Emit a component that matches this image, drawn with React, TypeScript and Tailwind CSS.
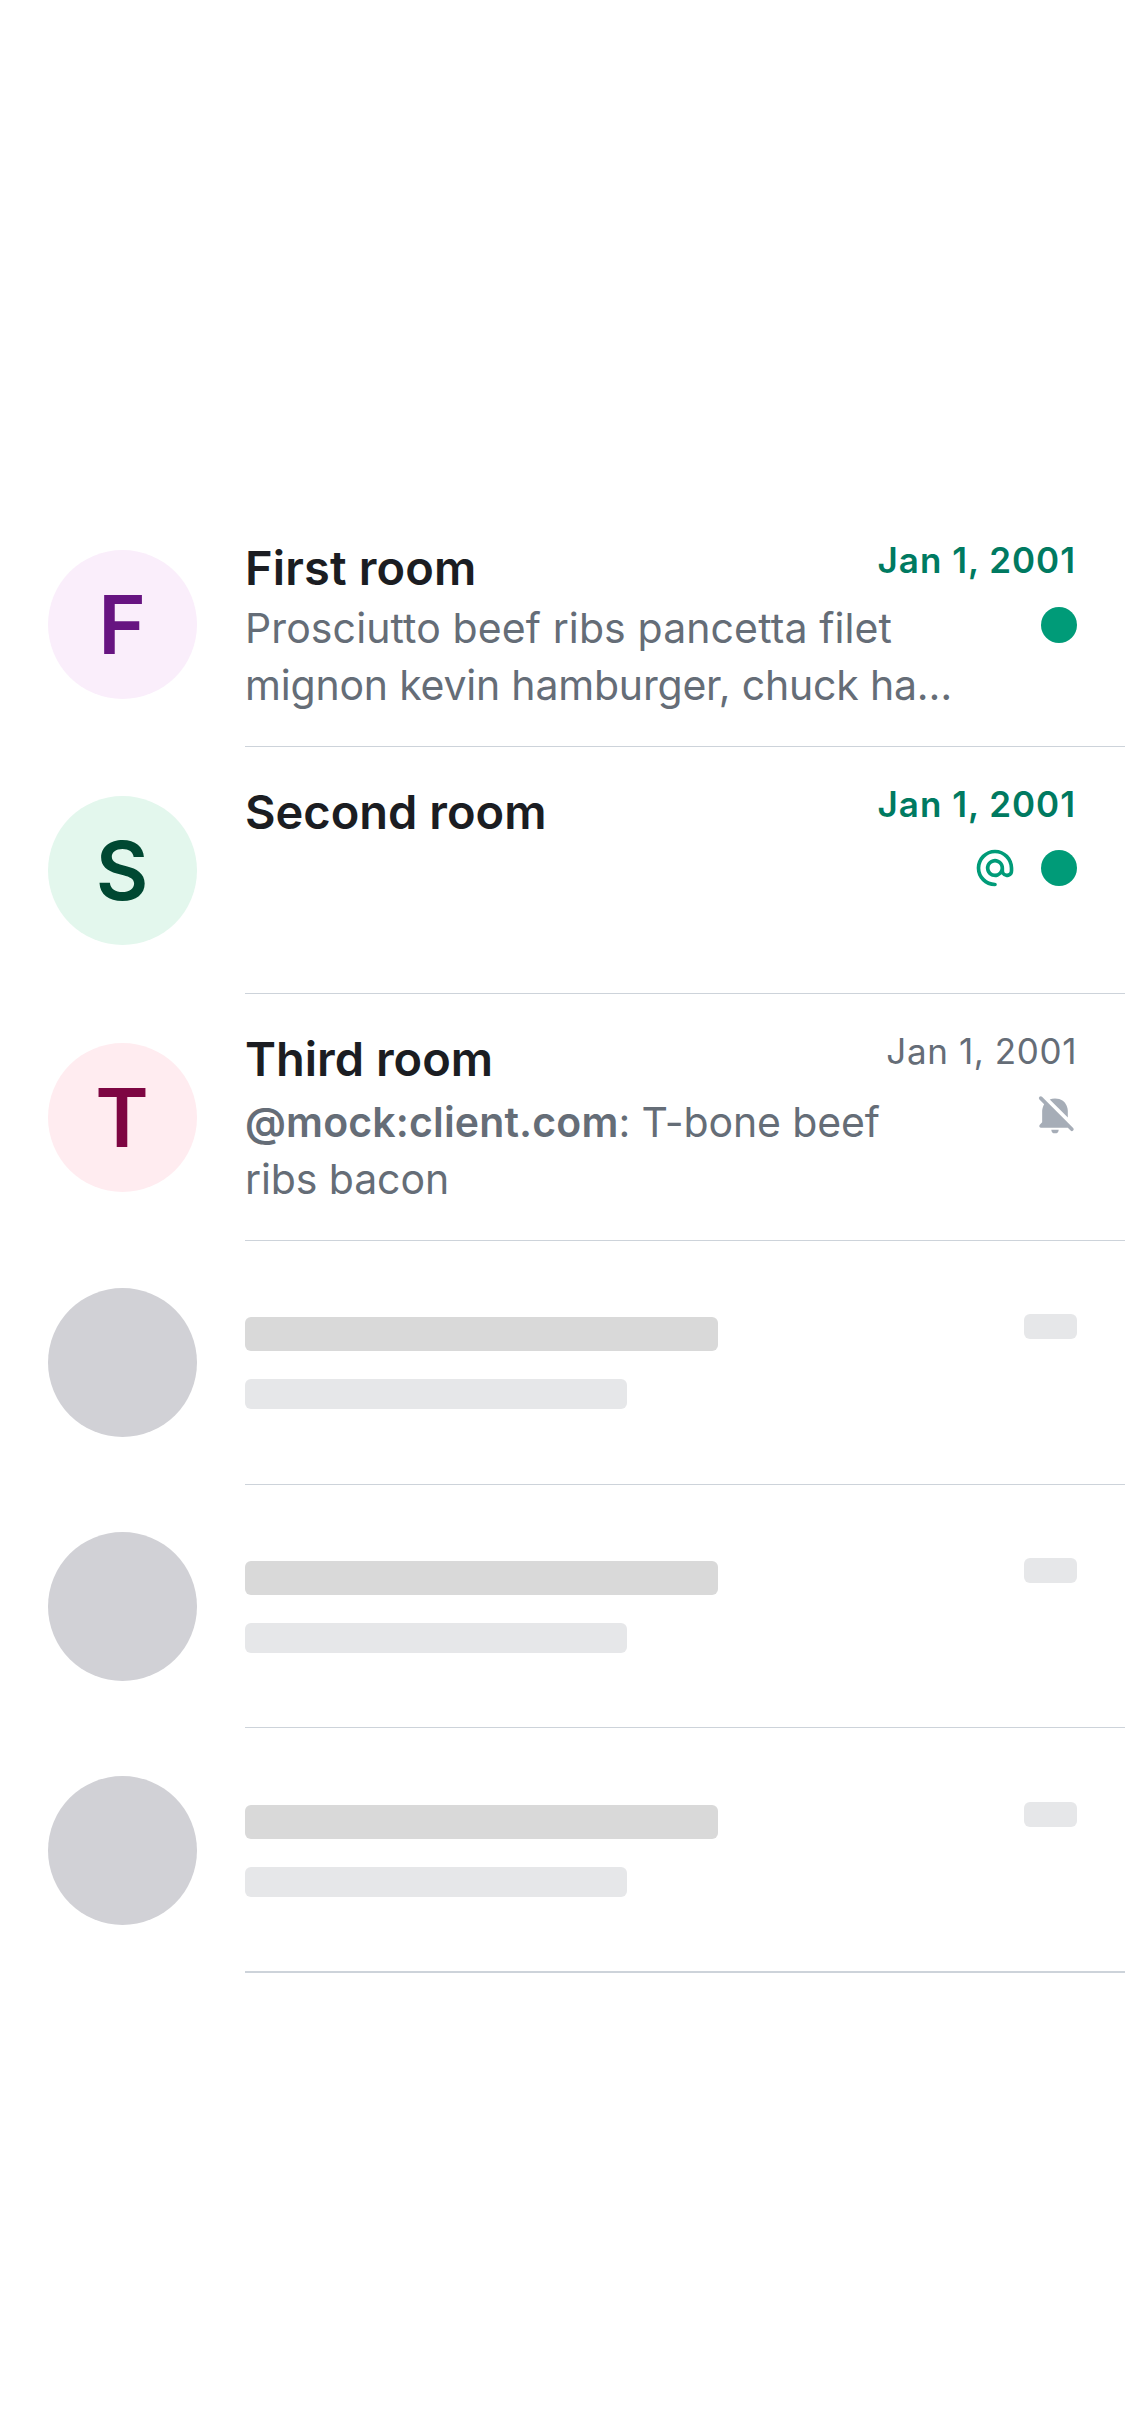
import type { ReactNode } from "react";

function MentionIcon() {
  return (
    <svg viewBox="0 0 24 24" className="size-11 text-[#009b78]" fill="currentColor" aria-hidden="true">
      <path d="M12 4a8 8 0 1 0 0 16 1 1 0 1 1 0 2C6.477 22 2 17.523 2 12S6.477 2 12 2s10 4.477 10 10v1.5a3.5 3.5 0 0 1-6.396 1.966A5 5 0 1 1 17 12v1.5a1.5 1.5 0 0 0 3 0V12a8 8 0 0 0-8-8m3 8a3 3 0 1 0-6 0 3 3 0 0 0 6 0" />
    </svg>
  );
}

function MutedIcon() {
  return (
    <svg viewBox="0 0 24 24" className="size-11 text-[#a6adb7]" fill="currentColor" aria-hidden="true">
      <path d="m4.917 2.083 17 17a1 1 0 0 1-1.414 1.414L19.006 19H4.414c-.89 0-1.337-1.077-.707-1.707L5 16v-6s0-2.034 1.096-3.91L3.504 3.498a1 1 0 0 1 1.414-1.414" />
      <path d="M19 13.35 9.136 3.484C9.93 3.181 10.874 3 12 3c7 0 7 7 7 7z" />
      <path d="M10 20h4a2 2 0 0 1-4 0" />
    </svg>
  );
}

function UnreadDot() {
  return <span className="size-9 rounded-full bg-[#009b78]" />;
}

interface RoomProps {
  title: string;
  initial: string;
  rowClass: string;
  avatarClass: string;
  titleClass?: string;
  previewClass?: string;
  dateClass: string;
  badgesClass: string;
  badges: ReactNode;
  children?: ReactNode;
}

function RoomRow({ title, initial, rowClass, avatarClass, titleClass, previewClass, dateClass, badgesClass, badges, children }: RoomProps) {
  return (
    <li className={`flex pl-12 ${rowClass}`}>
      <div className={`flex size-[149px] shrink-0 items-center justify-center rounded-full pt-0.5 pr-px text-[81px] leading-none font-semibold ${avatarClass}`}>
        {initial}
      </div>
      <div className="ml-12 flex min-w-0 flex-1 justify-between border-b border-[#cdd3da] pr-12">
        <div className="min-w-0 flex-1 pt-9">
          <h2 className={`text-[47px] leading-[58px] font-semibold whitespace-nowrap text-[#1b1d22] ${titleClass ?? ""}`}>{title}</h2>
          <div className={`text-[41px] leading-[57px] whitespace-nowrap text-[#656d77] ${previewClass ?? ""}`}>{children}</div>
        </div>
        <div className="flex shrink-0 flex-col items-end pt-[35px]">
          <time className={`text-[35px] leading-[44px] whitespace-nowrap ${dateClass}`}>Jan 1, 2001</time>
          <div className={`flex h-11 items-center gap-6 ${badgesClass}`}>{badges}</div>
        </div>
      </div>
    </li>
  );
}

function SkeletonRow({ dividerClass = "border-b" }: { dividerClass?: string }) {
  return (
    <li className="flex h-[244px] pl-12">
      <div className="mt-[47px] size-[149px] shrink-0 rounded-full bg-[#d1d1d6]" />
      <div className={`ml-12 flex flex-1 justify-between border-[#cdd3da] pr-12 ${dividerClass}`}>
        <div className="pt-[76px]">
          <div className="h-[34px] w-[473px] rounded-md bg-[#d9d9d9]" />
          <div className="mt-7 h-[30px] w-[382px] rounded-md bg-[#e6e7e9]" />
        </div>
        <div className="mt-[73px] h-[25px] w-[53px] rounded-md bg-[#e6e7e9]" />
      </div>
    </li>
  );
}

export default function App() {
  return (
    <main className="h-[2436px] w-[1125px] overflow-hidden bg-white pt-[503px] font-['Inter',sans-serif]">
      <ul>
        <RoomRow
          title="First room"
          initial="F"
          rowClass="h-[244px]"
          avatarClass="mt-[47px] bg-[#faeefb] text-[#671481]"
          titleClass="tracking-[0.15px]"
          previewClass="mt-[3px]"
          dateClass="mr-px font-semibold tracking-[1px] text-[#007a61]"
          badgesClass="mt-[21px]"
          badges={<UnreadDot />}
        >
          <p className="tracking-[0.11px]">Prosciutto beef ribs pancetta filet</p>
          <p className="tracking-[-0.2px]">mignon kevin hamburger, chuck ha…</p>
        </RoomRow>
        <RoomRow
          title="Second room"
          initial="S"
          rowClass="h-[247px]"
          avatarClass="mt-[49px] bg-[#e3f7ed] text-[#004832]"
          dateClass="mr-px font-semibold tracking-[1px] text-[#007a61]"
          badgesClass="mt-5"
          badges={
            <>
              <MentionIcon />
              <UnreadDot />
            </>
          }
        />
        <RoomRow
          title="Third room"
          initial="T"
          rowClass="h-[247px]"
          avatarClass="mt-[49px] bg-[#ffecf0] text-[#7e0642]"
          previewClass="mt-1.5"
          dateClass="tracking-[0.6px] text-[#656d77]"
          badgesClass="mt-5"
          badges={<MutedIcon />}
        >
          <p>
            <span className="font-semibold tracking-[0.15px]">@mock:client.com</span>
            <span className="tracking-[-0.15px]">: T-bone beef</span>
          </p>
          <p className="tracking-[-0.1px]">ribs bacon</p>
        </RoomRow>
        <SkeletonRow />
        <SkeletonRow dividerClass="mb-px border-b" />
        <SkeletonRow dividerClass="border-b-2" />
      </ul>
    </main>
  );
}
